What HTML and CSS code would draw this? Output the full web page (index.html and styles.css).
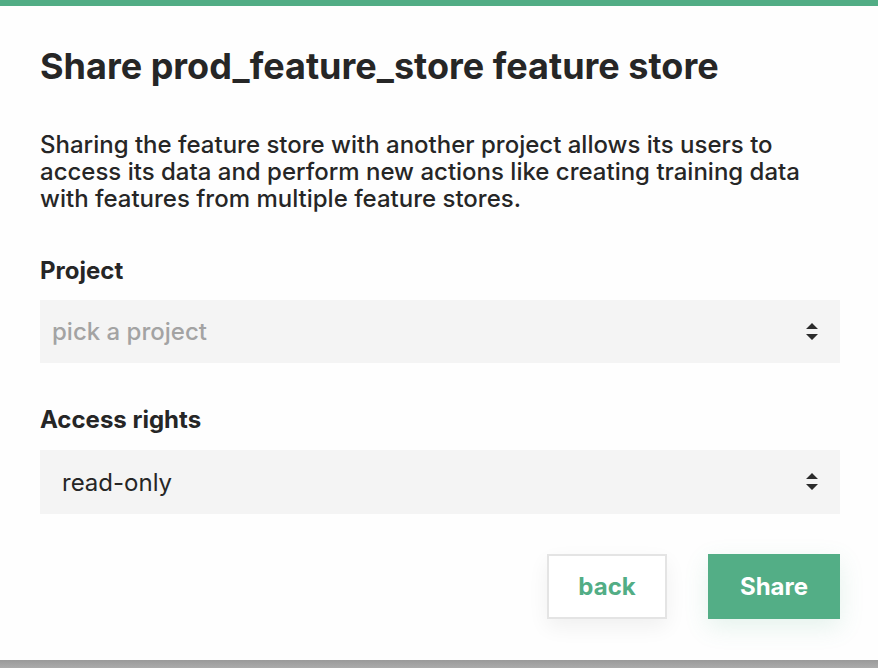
FILE: index.html
```html
<!DOCTYPE html>
<html>
<head>
<meta charset="utf-8">
<link rel="stylesheet" href="styles.css">
</head>
<body>
<div class="modal">
  <h1 class="title">Share prod_feature_store feature store</h1>
  <p class="desc">Sharing the feature store with another project allows its users to access its data and perform new actions like creating training data with features from multiple feature stores.</p>
  <div class="field">
    <div class="label">Project</div>
    <div class="select placeholder">
      <span class="select-text">pick a project</span>
      <svg class="arrows" width="12" height="18" viewBox="0 0 12 18"><path d="M6 0 L12 6 L0 6 Z M0 11 L12 11 L6 17 Z" fill="#2b2b2b"/></svg>
    </div>
  </div>
  <div class="field second">
    <div class="label">Access rights</div>
    <div class="select value">
      <span class="select-text">read-only</span>
      <svg class="arrows" width="12" height="18" viewBox="0 0 12 18"><path d="M6 0 L12 6 L0 6 Z M0 11 L12 11 L6 17 Z" fill="#2b2b2b"/></svg>
    </div>
  </div>
  <div class="actions">
    <button class="btn btn-back">back</button>
    <button class="btn btn-share">Share</button>
  </div>
</div>
<div class="backdrop"></div>
</body>
</html>
```

FILE: styles.css
```css
html, body {
  margin: 0;
  padding: 0;
}
body {
  background: #ababab;
  font-family: Inter, "Noto Sans", sans-serif;
  color: #262626;
  width: 878px;
  height: 668px;
  overflow: hidden;
}
.modal {
  box-sizing: border-box;
  height: 660px;
  background: #fefefe;
  border-top: 6px solid #52ad85;
  padding: 0 38px 0 40px;
  display: flex;
  flex-direction: column;
}
.title {
  margin: 38px 0 0 0;
  font-size: 36px;
  line-height: 44px;
  font-weight: 700;
  letter-spacing: 0;
}
.desc {
  margin: 43px 0 0 0;
  font-size: 24px;
  line-height: 27px;
  font-weight: 500;
}
.field {
  display: flex;
  flex-direction: column;
}
.label {
  margin-top: 44px;
  font-size: 24px;
  line-height: 29px;
  font-weight: 700;
}
.second .label {
  margin-top: 42px;
}
.select {
  margin-top: 15px;
  height: 63px;
  background: #f4f4f4;
  display: flex;
  align-items: center;
  justify-content: space-between;
  padding: 0 22px 0 12px;
  font-size: 24px;
}
.second .select {
  margin-top: 16px;
  height: 64px;
}
.placeholder .select-text {
  color: #a3a3a3;
  font-weight: 500;
}
.value {
  padding-left: 22px;
}
.value .select-text {
  color: #262626;
  font-weight: 400;
}
.arrows {
  display: block;
}
.actions {
  margin-top: 40px;
  display: flex;
  justify-content: flex-end;
  gap: 41px;
}
.btn {
  font-family: Inter, "Noto Sans", sans-serif;
  font-size: 24px;
  font-weight: 700;
  height: 65px;
  cursor: pointer;
}
.btn-back {
  width: 120px;
  background: #ffffff;
  color: #52ad85;
  border: 2px solid #e4e4e4;
  box-shadow: 0 8px 20px rgba(0, 0, 0, 0.06);
}
.btn-share {
  width: 132px;
  background: #53ae86;
  color: #ffffff;
  border: none;
  box-shadow: 0 8px 24px rgba(82, 173, 133, 0.15);
}
.backdrop {
  height: 8px;
  background: linear-gradient(#9a9a9a, #ababab);
}
```
